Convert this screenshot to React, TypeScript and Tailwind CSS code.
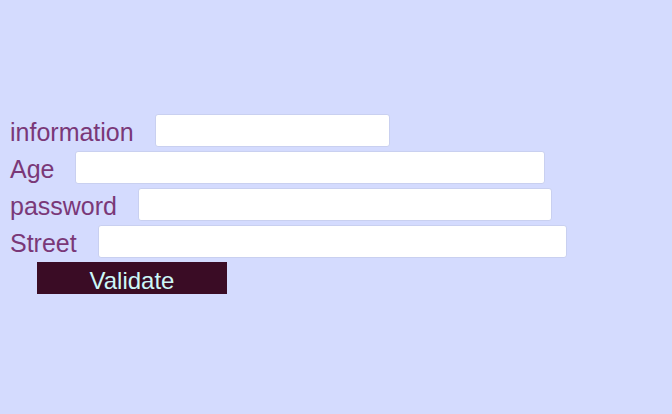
import React from "react";

const rows = [
  { label: "information", w: "w-[235px]" },
  { label: "Age", w: "w-[470px]" },
  { label: "password", w: "w-[414px]" },
  { label: "Street", w: "w-[469px]" },
];

export default function App() {
  return (
    <div className="w-[672px] h-[414px] bg-[#d4dbfe] pt-[114px] pl-[10px] font-['Liberation_Sans',Arial,sans-serif]">
      <div className="flex flex-col gap-[4px]">
        {rows.map((r) => (
          <div key={r.label} className="flex items-center gap-[21px] h-[33px]">
            <span className="text-[25px] text-[#7a3878] leading-none pt-[4px]">{r.label}</span>
            <input
              type="text"
              className={`${r.w} h-[33px] bg-white border border-[#c9d0f0] rounded-[3px] outline-none`}
            />
          </div>
        ))}
      </div>
      <button className="mt-[4px] ml-[27px] w-[190px] h-[32px] bg-[#3a0c25] text-[#cdf8f8] text-[24px] leading-none flex items-center justify-center pt-[5px]">
        Validate
      </button>
    </div>
  );
}
